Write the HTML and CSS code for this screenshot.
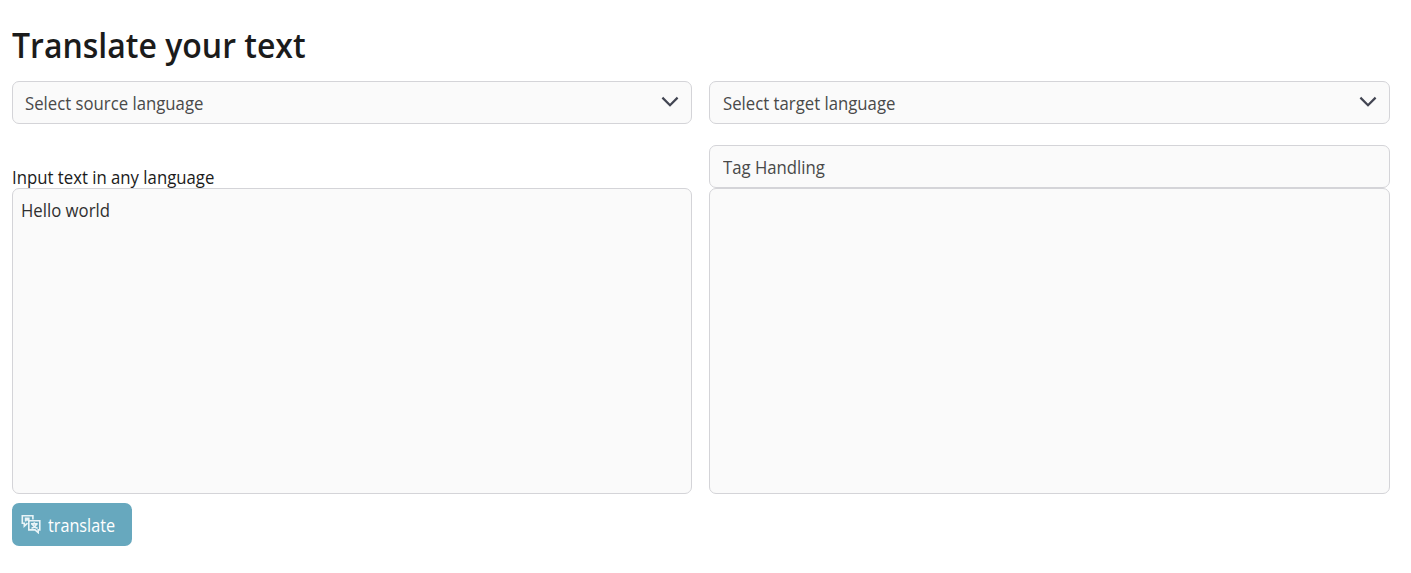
FILE: index.html
```html
<!DOCTYPE html>
<html lang="en">
<head>
<meta charset="utf-8">
<title>Translate your text</title>
<link rel="stylesheet" href="styles.css">
</head>
<body>
<main class="page">
  <h1 class="title"><span class="text">Translate your text</span></h1>
  <div class="columns">
    <section class="column">
      <div class="field source"><span class="text">Select source language</span>
        <svg class="chevron" width="18" height="12" viewBox="0 0 18 12"><path d="M1.400 1.600 9 9.200l7.600-7.600"/></svg>
      </div>
      <label class="label" for="input"><span class="text">Input text in any language</span></label>
      <div class="area" id="input"><span class="text">Hello world</span></div>
    </section>
    <section class="column">
      <div class="field target"><span class="text">Select target language</span>
        <svg class="chevron" width="18" height="12" viewBox="0 0 18 12"><path d="M1.400 1.600 9 9.200l7.600-7.600"/></svg>
      </div>
      <div class="field tags"><span class="text">Tag Handling</span></div>
      <div class="area"></div>
    </section>
  </div>
  <button class="button" type="button">
    <svg class="icon" width="20" height="20" viewBox="0 0 20 20">
      <path d="M6.500 9.200 3.300 12.200V9.200H1.300V1.800H11.900V5.500"/>
      <path d="M4.600 7.500V4.400h3.200v3.100M4.600 6h3"/>
      <path d="M7.800 6.800h11v9.100h-1.600v2.700l-3.200-2.700H7.800z"/>
      <path d="M10 9.900h6.700M13.300 8.300v1.600M15.500 10c-.6 2-2.500 3.500-5 4.200M11.500 10.600c.9 1.800 2.600 3 5.200 3.600"/>
    </svg>
    <span class="text">translate</span>
  </button>
</main>
</body>
</html>
```
FILE: styles.css
```css
* { box-sizing: border-box; }
body {
  margin: 0;
  background: #fff;
  color: #1b1b1b;
  font: 18px/24px "Open Sans", "Noto Sans", sans-serif;
}
.page { padding: 21px 21px 0 12px; }

/* Slightly condensed letterforms */
.text {
  display: inline-block;
  transform: scaleX(0.93);
  transform-origin: left center;
}
.title .text { transform: scaleX(0.914); }
.button .text { transform: scaleX(0.9); }

.title {
  margin: 0;
  height: 60px;
  font-size: 35px;
  line-height: 48px;
  font-weight: 600;
}
.columns {
  display: grid;
  grid-template-columns: 680px 681px;
  column-gap: 17px;
}
.column { display: flex; flex-direction: column; }
.field {
  display: flex;
  align-items: center;
  justify-content: space-between;
  height: 43px;
  padding: 0 12px;
  border: 1px solid #d4d4d8;
  border-radius: 7px;
  background: #fafafa;
  color: #494949;
}
.target, .tags { padding-left: 12.500px; }
.tags { margin-top: 21px; }
.chevron {
  flex: none;
  margin-top: -1px;
  fill: none;
  stroke: #424552;
  stroke-width: 2.200;
}
.label {
  height: 64px;
  padding-top: 41px;
}
.area {
  height: 306px;
  padding: 9px 8px;
  border: 1px solid #d4d4d8;
  border-radius: 7px;
  background: #fafafa;
  color: #303030;
}
.button {
  display: flex;
  align-items: center;
  gap: 7px;
  width: 120px;
  height: 43px;
  margin-top: 9px;
  padding: 0 0 0 9px;
  border: 0;
  border-radius: 7px;
  background: #67a8be;
  color: #fff;
  font: inherit;
}
.icon {
  flex: none;
  margin-top: -1px;
  fill: none;
  stroke: #e9f4f7;
  stroke-width: 1.600;
}
```
